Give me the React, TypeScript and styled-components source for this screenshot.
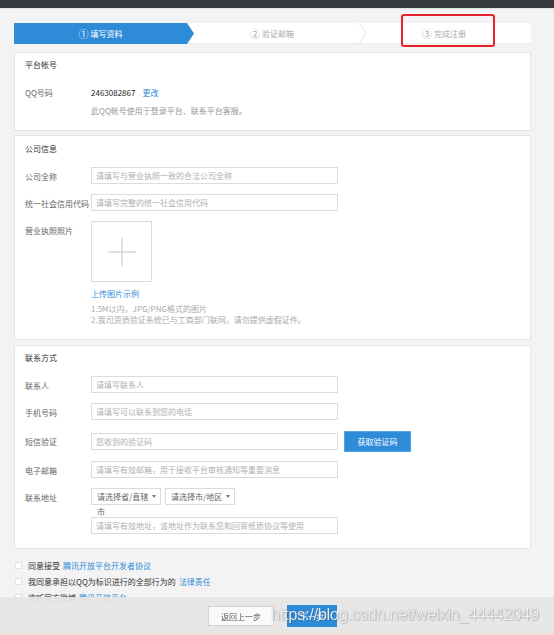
import React from 'react'
import styled, { createGlobalStyle } from 'styled-components'

const FONT = `"Noto Sans CJK SC", "Noto Sans", sans-serif`
const BLUE = '#2e8bd8'

const GlobalStyle = createGlobalStyle`
    html, body {
        margin: 0;
        padding: 0;
        height: 100%;
        overflow: hidden;
    }
    body {
        background: #f3f3f3;
        font-family: ${FONT};
        font-size: 8px;
        color: #333;
    }
`

const TopBar = styled.div`
    height: 8px;
    background: #35393d;
    border-bottom: 1px solid #e2e2e2;
`

const Main = styled.div`
    padding: 0 23px 0 14px;
`

const StepBar = styled.div`
    position: relative;
    display: flex;
    height: 21px;
    margin-top: 14px;
    background: #fff;
    box-shadow: inset 0 -1px 0 #ececec;
`

const StepActive = styled.div`
    display: flex;
    align-items: center;
    justify-content: center;
    width: 180px;
    padding-right: 7px;
    box-sizing: border-box;
    background: ${BLUE};
    color: #fff;
    clip-path: polygon(0 0, calc(100% - 7px) 0, 100% 50%, calc(100% - 7px) 100%, 0 100%);
`

const Step = styled.div<{ $width?: number; $shift: number }>`
    display: flex;
    align-items: center;
    justify-content: center;
    ${p => (p.$width ? `width: ${p.$width}px;` : 'flex: 1;')}
    padding-right: ${p => p.$shift}px;
    box-sizing: border-box;
    color: #aaa;
`

const StepGroup = styled.div`
    display: flex;
    width: 173px;
`

const Num = styled.span`
    font-size: 10px;
    margin-right: 2px;
    line-height: 1;
`

const Annotation = styled.div`
    position: absolute;
    left: 387px;
    top: -9px;
    width: 94px;
    height: 33px;
    box-sizing: border-box;
    border: 2px solid #e8222a;
    border-radius: 3px;
`

const Panel = styled.div<{ $top: number; $gap: number }>`
    margin-top: ${p => p.$gap}px;
    padding: ${p => p.$top}px 10px 14px;
    background: #fff;
    border: 1px solid #e6e6e6;
`

const PanelTitle = styled.div`
    line-height: 10px;
    color: #333;
`

const Rows = styled.div`
    display: flex;
    flex-direction: column;
    gap: 10px;
    margin-top: 13px;
`

const Row = styled.div<{ $offset?: number }>`
    display: flex;
    align-items: flex-start;
    margin-top: ${p => p.$offset || 0}px;
`

const Label = styled.div`
    width: 66px;
    flex-shrink: 0;
    padding-top: 5px;
    line-height: 10px;
    color: #666;
    white-space: nowrap;
`

const Field = styled.div`
    display: flex;
    flex-direction: column;
`

const InfoRow = styled.div`
    display: flex;
    margin-top: 18px;
    line-height: 10px;
`

const InfoLabel = styled.div`
    width: 66px;
    color: #666;
`

const Value = styled.span`
    color: #222;
    margin-right: 7px;
`

const Link = styled.a`
    color: ${BLUE};
    text-decoration: none;
`

const Hint = styled.div<{ $gap?: number }>`
    margin: ${p => p.$gap || 0}px 0 0 66px;
    line-height: 10px;
    color: #999;
`

const TextInput = styled.input`
    width: 247px;
    height: 17px;
    box-sizing: border-box;
    margin: 0;
    padding: 0 4px;
    border: 1px solid #dcdcdc;
    font-family: ${FONT};
    font-size: 8px;
    color: #333;
    outline: none;
    &::placeholder {
        color: #b0b0b0;
    }
`

const SmsRow = styled(Row)`
    height: 21px;
    align-items: center;
`

const SmsLabel = styled(Label)`
    padding-top: 0;
`

const CodeButton = styled.button`
    width: 67px;
    height: 21px;
    margin-left: 6px;
    padding: 0;
    border: 1px solid #5aa5e5;
    background: ${BLUE};
    color: #fff;
    font-family: ${FONT};
    font-size: 8px;
`

const UploadBox = styled.div`
    display: flex;
    align-items: center;
    justify-content: center;
    width: 61px;
    height: 61px;
    box-sizing: border-box;
    border: 1px solid #dcdcdc;
`

const UploadLink = styled(Link)`
    margin-top: 7px;
    line-height: 10px;
`

const UploadHints = styled.div`
    margin-top: 4px;
    line-height: 11px;
    color: #aaa;
`

const Selects = styled.div`
    display: flex;
    gap: 4px;
`

const SelectBox = styled.div`
    display: flex;
    align-items: center;
    justify-content: space-between;
    width: 70px;
    height: 17px;
    box-sizing: border-box;
    padding: 0 4px 0 5px;
    border: 1px solid #dcdcdc;
    color: #666;
    white-space: nowrap;
`

const Caret = styled.span`
    width: 0;
    height: 0;
    border-left: 2.5px solid transparent;
    border-right: 2.5px solid transparent;
    border-top: 3px solid #777;
`

const Wrapped = styled.div`
    height: 12px;
    padding-left: 6px;
    line-height: 14px;
    color: #666;
`

const Agreements = styled.div`
    margin-top: 8px;
    padding-left: 1px;
`

const AgreeRow = styled.div`
    display: flex;
    align-items: center;
    height: 16px;
    color: #333;
`

const CheckBox = styled.span`
    width: 7px;
    height: 7px;
    box-sizing: border-box;
    margin-right: 6px;
    border: 1px solid #e2e2e2;
    background: #fff;
`

const AgreeLink = styled(Link)`
    margin-left: 3px;
`

const FooterBar = styled.div`
    position: fixed;
    left: 0;
    right: 0;
    bottom: 0;
    height: 38px;
    box-sizing: border-box;
    padding: 3px 9px 0 0;
    display: flex;
    align-items: center;
    justify-content: center;
    gap: 13px;
    background: rgba(229, 229, 229, 0.94);
    border-bottom: 3px solid #ebe2d8;
`

const FooterButton = styled.button<{ $primary?: boolean }>`
    width: ${p => (p.$primary ? 50 : 66)}px;
    height: ${p => (p.$primary ? 22 : 20)}px;
    padding: 0;
    border: 1px solid ${p => (p.$primary ? BLUE : '#d4d4d4')};
    background: ${p => (p.$primary ? BLUE : '#fafafa')};
    color: ${p => (p.$primary ? '#fff' : '#555')};
    font-family: ${FONT};
    font-size: 8px;
`

const Watermark = styled.div`
    position: fixed;
    left: 271px;
    top: 605px;
    font-family: "Liberation Sans", Arial, sans-serif;
    font-size: 16.5px;
    letter-spacing: -0.35px;
    color: rgba(248, 248, 248, 0.92);
    text-shadow: 0 0 1px rgba(0, 0, 0, 0.45), 1px 1px 1px rgba(0, 0, 0, 0.15);
    white-space: nowrap;
    pointer-events: none;
`

function Chevron() {
    return <svg width="9" height="21" viewBox="0 0 9 21">
        <polyline points="1,0 8,10.5 1,21" fill="none" stroke="#e3e3e3" strokeWidth="1" />
    </svg>
}

function Plus() {
    return <svg width="28" height="28" viewBox="0 0 28 28">
        <path d="M14 0V28M0 14H28" stroke="#c4c4c4" strokeWidth="1" />
    </svg>
}

interface IInputRow {
    label: string
    placeholder: string
}

const companyRows: IInputRow[] = [
    { label: '公司全称', placeholder: '请填写与营业执照一致的合法公司全称' },
    { label: '统一社会信用代码', placeholder: '请填写完整的统一社会信用代码' },
]

function InputRow({ label, placeholder }: IInputRow) {
    return <Row>
        <Label>{label}</Label>
        <TextInput placeholder={placeholder} />
    </Row>
}

export default function App() {
    return <>
        <GlobalStyle />
        <TopBar />
        <Main>
            <StepBar>
                <StepActive><Num>①</Num>填写资料</StepActive>
                <StepGroup>
                    <Step $shift={8}><Num>②</Num>验证邮箱</Step>
                    <Chevron />
                </StepGroup>
                <Step $shift={10}><Num>③</Num>完成注册</Step>
                <Annotation />
            </StepBar>

            <Panel $top={7} $gap={8}>
                <PanelTitle>平台帐号</PanelTitle>
                <InfoRow>
                    <InfoLabel>QQ号码</InfoLabel>
                    <Value>2463082867</Value>
                    <Link>更改</Link>
                </InfoRow>
                <Hint $gap={8}>此QQ帐号使用于登录平台、联系平台客服。</Hint>
            </Panel>

            <Panel $top={8} $gap={4}>
                <PanelTitle>公司信息</PanelTitle>
                <Rows>
                    {companyRows.map(row => <InputRow key={row.label} {...row} />)}
                    <Row>
                        <Label>营业执照照片</Label>
                        <Field>
                            <UploadBox><Plus /></UploadBox>
                            <UploadLink>上传图片示例</UploadLink>
                            <UploadHints>
                                <div>1.5M以内，JPG/PNG格式的图片</div>
                                <div>2.我司资质验证系统已与工商部门联网，请勿提供虚假证件。</div>
                            </UploadHints>
                        </Field>
                    </Row>
                </Rows>
            </Panel>

            <Panel $top={7} $gap={5}>
                <PanelTitle>联系方式</PanelTitle>
                <Rows>
                    <InputRow label='联系人' placeholder='请填写联系人' />
                    <InputRow label='手机号码' placeholder='请填写可以联系到您的电话' />
                    <SmsRow $offset={1}>
                        <SmsLabel>短信验证</SmsLabel>
                        <TextInput placeholder='您收到的验证码' />
                        <CodeButton>获取验证码</CodeButton>
                    </SmsRow>
                    <Row $offset={-1}>
                        <Label>电子邮箱</Label>
                        <TextInput placeholder='请填写有效邮箱，用于接收平台审核通知等重要消息' />
                    </Row>
                    <Row>
                        <Label>联系地址</Label>
                        <Field>
                            <Selects>
                                <SelectBox>请选择省/直辖<Caret /></SelectBox>
                                <SelectBox>请选择市/地区<Caret /></SelectBox>
                            </Selects>
                            <Wrapped>市</Wrapped>
                            <TextInput placeholder='请填写有效地址，该地址作为联系您和回寄纸质协议等使用' />
                        </Field>
                    </Row>
                </Rows>
            </Panel>

            <Agreements>
                <AgreeRow><CheckBox />同意接受<AgreeLink>腾讯开放平台开发者协议</AgreeLink></AgreeRow>
                <AgreeRow><CheckBox />我同意承担以QQ为标识进行的全部行为的<AgreeLink>法律责任</AgreeLink></AgreeRow>
                <AgreeRow><CheckBox />收听官方微博<AgreeLink>腾讯开放平台</AgreeLink></AgreeRow>
            </Agreements>
        </Main>

        <FooterBar>
            <FooterButton>返回上一步</FooterButton>
            <FooterButton $primary>下一步</FooterButton>
        </FooterBar>
        <Watermark>https://blog.csdn.net/weixin_44442049</Watermark>
    </>
}
